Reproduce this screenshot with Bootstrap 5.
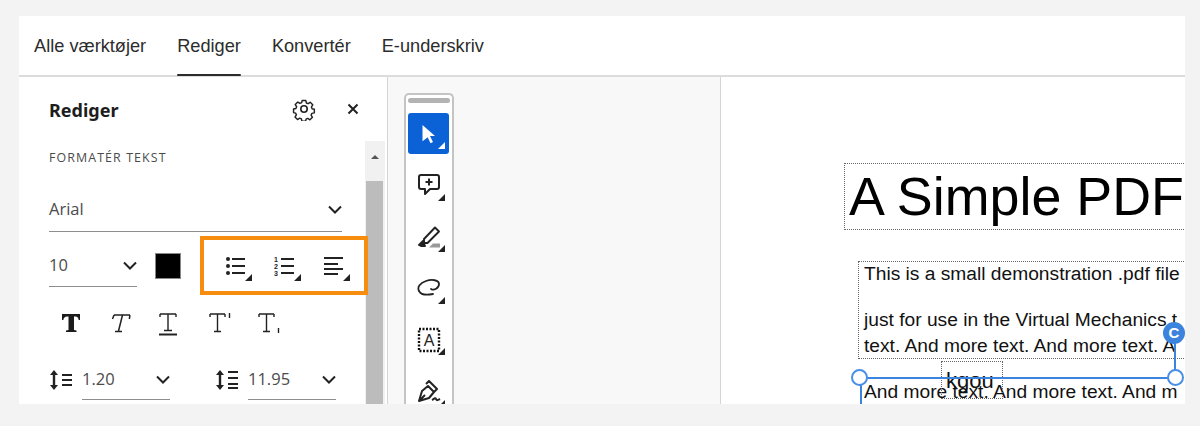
<!DOCTYPE html>
<html lang="da"><head><meta charset="utf-8"><title>Rediger</title>
<link rel="stylesheet" href="https://cdn.jsdelivr.net/npm/bootstrap@5.3.0/dist/css/bootstrap.min.css">
<style>
html,body{height:426px;overflow:hidden}
body{background:#f3f3f3;padding:16px 15px 22px 19px;font-family:"Open Sans","Liberation Sans",sans-serif;color:#2c2c2c}
.frame{height:388px;background:#fff;overflow:hidden}
.tabs{height:61px;border-bottom:2px solid #dcdcdc;padding-left:15px;gap:31px}
.tabitem{height:60px;line-height:60px;font-family:"Liberation Sans",sans-serif;font-size:18.2px;color:#2c2c2c;position:relative}
.tabon::after{content:"";position:absolute;left:0;right:0;bottom:0;height:2px;background:#2c2c2c;border-radius:1px}
.body-row{height:327px}
.side{width:369px;border-right:1px solid #d5d5d5;padding-right:2px;position:relative;flex:none}
.sidehead{height:64px;padding:0 26px 0 30px}
.sidetitle{font-family:"Noto Sans",sans-serif;font-weight:700;font-size:18px;color:#1d1d1d;margin:4px 0 0}
.paneinner{width:350px;padding-left:30px}
.sectlabel{font-size:12.4px;letter-spacing:1.1px;color:#4b4b4b;height:34px;line-height:34px;margin:0}
.fld{border-bottom:1px solid #8e8e8e;font-size:16.5px;color:#4b4b4b;flex:none}
.fontfld{width:293px;height:44px;margin-top:13px}
.row1{height:67px}
.sizefld{width:88px;height:42px}
.swatch{width:26px;height:26px;background:#000;border:1px solid #888;margin-left:18px;flex:none}
.orangebox{width:168px;height:59px;border:4px solid #f68d0e;margin-left:19px;padding:0 0 0 21px;gap:22px;flex:none;position:relative;z-index:1}
.fmt{gap:21px;height:48px;padding-left:9px}
.row3{gap:45px;height:66px}
.lhfld{width:88px;height:40px}
.scrolltrack{position:absolute;right:2px;top:64px;width:20px;bottom:0;background:#f1f1f1}
.scrollthumb{position:absolute;left:1px;right:2px;top:40px;bottom:0;background:#bcbcbc}
.scrollarrow{position:absolute;left:6px;top:14px;width:0;height:0;border-left:4px solid transparent;border-right:4px solid transparent;border-bottom:4px solid #555}
.mid{width:333px;background:#f8f8f8;border-right:1px solid #d5d5d5;flex:none;padding:16px 0 0 16px}
.rail{width:50px;height:320px;background:#fff;border:2px solid #c4c4c4;border-bottom:0;border-radius:5px 5px 0 0;padding:3px 2px 0 2px}
.grip{height:5px;background:#b3b3b3;border-radius:3px;margin-bottom:10px;flex:none}
.railbtn{height:41px;width:41px;margin-bottom:10.5px;position:relative;display:flex;align-items:center;justify-content:center;border-radius:3px;flex:none}
.railon{background:#0b62d6}
.corner{position:absolute;right:4px;bottom:5px;width:0;height:0;border-left:7px solid transparent;border-bottom:7px solid #222}
.railon .corner{border-bottom-color:#fff}
.doc{flex:1;position:relative;overflow:hidden;background:#fff;font-family:"Liberation Sans",sans-serif;color:#111}
.dotbox{position:absolute;border:1px dotted #666}
.ln{position:absolute;white-space:nowrap;font-size:19.2px;line-height:22px}
.bigtitle{position:absolute;left:128px;top:91px;font-size:53.8px;line-height:56px;white-space:nowrap;color:#000}
.bl{position:absolute;background:#3c83dd}
.hnd{position:absolute;width:17px;height:17px;border:2px solid #4a8ee6;background:#fff;border-radius:50%}
.rot{position:absolute;left:442px;top:245px;width:22px;height:22px;border-radius:50%;background:#3c83dd;color:#fff;font-weight:700;font-size:15px;line-height:22px;text-align:center}
</style></head><body>
<div class="frame d-flex flex-column">
 <nav class="tabs d-flex">
  <div class="tabitem">Alle værktøjer</div>
  <div class="tabitem tabon">Rediger</div>
  <div class="tabitem">Konvertér</div>
  <div class="tabitem">E-underskriv</div>
 </nav>
 <div class="body-row d-flex">
  <aside class="side">
   <div class="sidehead d-flex align-items-center justify-content-between">
    <h2 class="sidetitle">Rediger</h2>
    <div class="d-flex align-items-center" style="gap:31px">
     <svg width="24" height="24" viewBox="0 0 24 24" fill="none" stroke="#222" stroke-width="1.6" stroke-linejoin="round"><path d="M10 2.500h4l.6 2.800 1.900.8 2.400-1.500 2.800 2.800-1.500 2.400.8 1.900 2.500.6v4l-2.800.6-.8 1.900 1.500 2.400-2.800 2.800-2.400-1.500-1.900.8-.6 2.300h-4l-.6-2.600-1.900-.8-2.400 1.500-2.800-2.800 1.500-2.400-.8-1.900-2.300-.6v-4l2.600-.6.8-1.900-1.500-2.400 2.800-2.800 2.400 1.500 1.900-.8z" transform="translate(1.200 1.200) scale(.9)"/><circle cx="12" cy="12" r="3.200"/></svg>
     <svg width="12" height="12" viewBox="0 0 12 12" stroke="#222" stroke-width="2"><path d="M1.500 1.500l9 9M10.500 1.500l-9 9"/></svg>
    </div>
   </div>
   <div class="paneinner">
    <p class="sectlabel">FORMATÉR TEKST</p>
    <div class="fld fontfld d-flex align-items-center justify-content-between"><span>Arial</span><svg width="14" height="9" viewBox="0 0 14 9" fill="none" stroke="#222" stroke-width="2"><path d="M1 1.500l6 6 6-6"/></svg></div>
    <div class="row1 d-flex align-items-center">
     <div class="fld sizefld d-flex align-items-center justify-content-between"><span>10</span><svg width="14" height="9" viewBox="0 0 14 9" fill="none" stroke="#222" stroke-width="2"><path d="M1 1.500l6 6 6-6"/></svg></div>
     <div class="swatch"></div>
     <div class="orangebox d-flex align-items-center">
      <svg width="27" height="30" viewBox="0 0 27 30" fill="#222"><circle cx="3" cy="8" r="2"/><circle cx="3" cy="15" r="2"/><circle cx="3" cy="22" r="2"/><path d="M7 7h13v2H7zM7 14h13v2H7zM7 21h13v2H7zM20 30l7-7v7z"/></svg>
      <svg width="27" height="30" viewBox="0 0 27 30" fill="#222"><text x="2" y="11" font-family="Liberation Sans" font-size="7" font-weight="700" text-anchor="middle">1</text><text x="2" y="18" font-family="Liberation Sans" font-size="7" font-weight="700" text-anchor="middle">2</text><text x="2" y="25" font-family="Liberation Sans" font-size="7" font-weight="700" text-anchor="middle">3</text><path d="M7 7h13v2H7zM7 14h13v2H7zM7 21h13v2H7zM20 30l7-7v7z"/></svg>
      <svg width="27" height="30" viewBox="0 0 27 30" fill="#222"><path d="M1 6h19v2H1zM1 12h14v2H1zM1 17h19v2H1zM1 22h14v2H1zM20 30l7-7v7z"/></svg>
     </div>
    </div>
    <div class="fmt d-flex align-items-center">
     <svg width="28" height="26" viewBox="0 0 28 26" fill="#1b1b1b"><path d="M4 4h18v6h-1.300c-.3-2-1.200-3.500-3.200-3.500H16V20l2.500.6V22H8v-1.400l2.500-.6V6.500H9C7 6.500 5.600 8 5.300 10H4z"/></svg>
     <svg width="28" height="26" viewBox="0 0 28 26" fill="none" stroke="#222" stroke-width="1.500"><path d="M7 5h16M15.500 5l-4 16M8 21.500h7M7 5l-1.500 4M23 5l-.7 4"/></svg>
     <svg width="28" height="26" viewBox="0 0 28 26" fill="none" stroke="#222" stroke-width="1.400"><path d="M4 4h16M12 4v16M8 20.500h8M4 4v3M20 4v3"/><path d="M3 24.500h18" stroke-width="2"/></svg>
     <svg width="28" height="26" viewBox="0 0 28 26" fill="none" stroke="#222" stroke-width="1.400"><path d="M5 4h15M12.500 4v17M9 21.500h7M5 4v3M20 4v3M24.500 3v5"/></svg>
     <svg width="28" height="26" viewBox="0 0 28 26" fill="none" stroke="#222" stroke-width="1.400"><path d="M5 4h15M12.500 4v17M9 21.500h7M5 4v3M20 4v3M24.500 18v5"/></svg>
    </div>
    <div class="row3 d-flex align-items-center">
     <div class="d-flex align-items-center" style="gap:5px">
      <svg width="28" height="24" viewBox="0 0 28 24" fill="#222"><path d="M5 2l4 5H6.200v10H9l-4 5-4-5h2.800V7H1zM13 6h10v2H13zM13 11h10v2H13zM13 16h10v2H13z"/></svg>
      <div class="fld lhfld d-flex align-items-center justify-content-between"><span>1.20</span><svg width="14" height="9" viewBox="0 0 14 9" fill="none" stroke="#222" stroke-width="2"><path d="M1 1.500l6 6 6-6"/></svg></div>
     </div>
     <div class="d-flex align-items-center" style="gap:5px">
      <svg width="28" height="24" viewBox="0 0 28 24" fill="#222"><path d="M5 2l4 5H6.200v10H9l-4 5-4-5h2.800V7H1zM13 3h10v2H13zM13 9h10v2H13zM13 15h10v2H13zM13 19h10v2H13z"/></svg>
      <div class="fld lhfld d-flex align-items-center justify-content-between"><span>11.95</span><svg width="14" height="9" viewBox="0 0 14 9" fill="none" stroke="#222" stroke-width="2"><path d="M1 1.500l6 6 6-6"/></svg></div>
     </div>
    </div>
   </div>
   <div class="scrolltrack"><div class="scrollarrow"></div><div class="scrollthumb"></div></div>
  </aside>
  <div class="mid">
   <div class="rail d-flex flex-column">
    <div class="grip"></div>
    <div class="railbtn railon"><svg width="16" height="20" viewBox="0 0 16 20" fill="#fff"><path d="M1.500 1l12.500 11h-5l3 6-2.500 1.200-2.800-6-5.200 4z"/></svg><span class="corner"></span></div>
    <div class="railbtn"><svg width="24" height="24" viewBox="0 0 24 24" fill="none" stroke="#222" stroke-width="2" stroke-linejoin="round"><path d="M4 2h16a2 2 0 0 1 2 2v10a2 2 0 0 1-2 2h-7l-5 5v-5H4a2 2 0 0 1-2-2V4a2 2 0 0 1 2-2z"/><path d="M12 5.500v7M8.500 9h7"/></svg><span class="corner"></span></div>
    <div class="railbtn"><svg width="26" height="24" viewBox="0 0 26 24" fill="none" stroke="#222" stroke-width="1.900" stroke-linejoin="round"><path d="M8 14L19 2.500l4 4L11.500 18H8z"/><path d="M7 16l-4 4 2 1h4z" fill="#222"/><path d="M13 22.500h11v-4H17z" fill="#999" stroke="none"/></svg><span class="corner"></span></div>
    <div class="railbtn"><svg width="24" height="18" viewBox="0 0 24 18" fill="none" stroke="#222" stroke-width="1.800" stroke-linecap="round"><path d="M14 10c3 2 8-1 8-5C22 1 15 0 9 2 3 4 0 8 2 12c2 4 9 4 14 3"/></svg><span class="corner"></span></div>
    <div class="railbtn"><svg width="24" height="26" viewBox="0 0 24 26"><rect x="2" y="2" width="20" height="22" fill="none" stroke="#111" stroke-width="2.400" stroke-dasharray="2 1.500"/><text x="12" y="19" font-family="Liberation Sans" font-size="16" fill="#222" text-anchor="middle">A</text></svg><span class="corner"></span></div>
    <div class="railbtn"><svg width="26" height="26" viewBox="0 0 26 26" fill="none" stroke="#222" stroke-width="2" stroke-linejoin="round"><path d="M3 23l3-10 6-5 6 6-5 6zM3 23l6-6M10 6l3-3 8 8-3 3"/><path d="M16 22c2-1 3-3 4-1s2 1 4 0"/></svg><span class="corner"></span></div>
   </div>
  </div>
  <div class="doc">
   <div class="dotbox" style="left:123px;top:86px;width:400px;height:67px"></div>
   <div class="bigtitle">A Simple PDF</div>
   <div class="dotbox" style="left:137px;top:184px;width:400px;height:98px"></div>
   <div class="ln" style="left:143px;top:186px">This is a small demonstration .pdf file</div>
   <div class="ln" style="left:143px;top:232px">just for use in the Virtual Mechanics t</div>
   <div class="ln" style="left:143px;top:258px">text. And more text. And more text. A</div>
   <div class="ln" style="left:143px;top:304px">And more text. And more text. And m</div>
   <div class="dotbox" style="left:220px;top:284px;width:62px;height:38px"></div>
   <div class="ln" style="left:225px;top:293px;font-size:22px">kgou</div>
   <div class="bl" style="left:140px;top:300px;width:320px;height:2px"></div>
   <div class="bl" style="left:139px;top:304px;width:2px;height:30px"></div>
   <div class="bl" style="left:453px;top:262px;width:2px;height:32px"></div>
   <div class="hnd" style="left:130px;top:292px"></div>
   <div class="hnd" style="left:446px;top:292px"></div>
   <div class="rot">C</div>
  </div>
 </div>
</div>
</body></html>
